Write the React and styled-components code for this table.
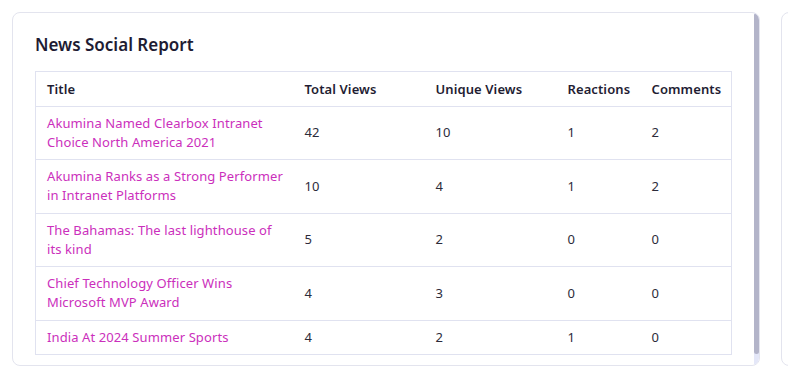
import React from 'react';
import styled, { createGlobalStyle } from 'styled-components';

const GlobalStyle = createGlobalStyle`
  html, body {
    margin: 0;
    padding: 0;
    background: #ffffff;
    overflow: hidden;
  }
  body {
    font-family: "Noto Sans", "Liberation Sans", sans-serif;
  }
`;

const Page = styled.div`
  display: flex;
  gap: 21px;
  padding: 12px 0 0 12px;
  width: 1200px;
`;

const Card = styled.div`
  flex: none;
  display: flex;
  width: ${(p) => p.width}px;
  height: 354px;
  box-sizing: border-box;
  border: 1px solid #e3e4ee;
  border-radius: 8px;
  background: #fff;
  overflow: hidden;
`;

const CardBody = styled.div`
  flex: 1;
  min-width: 0;
  padding: 20px 22px 22px 22px;
`;

// custom scroll rail drawn at the right edge of the card
const Rail = styled.div`
  flex: none;
  width: 5px;
  display: flex;
  flex-direction: column;
  background: #e4e7f8;
  border-radius: 0 0 4px 0;
`;

const Thumb = styled.div`
  height: ${(p) => p.pct}%;
  background: #b3b4c9;
  border-radius: 3px;
`;

const Heading = styled.h2`
  margin: 0 0 14px 0;
  font-size: 17px;
  line-height: 24px;
  font-weight: 600;
  color: #1e1c33;
`;

const Table = styled.table`
  width: 100%;
  border-collapse: collapse;
  border: 1px solid #e0e2f0;
  table-layout: fixed;
  font-size: 13px;
  line-height: 19px;
  letter-spacing: 0.1px;
`;

const Th = styled.th`
  box-sizing: border-box;
  width: ${(p) => (p.w ? `${p.w}px` : 'auto')};
  text-align: left;
  padding: 7.5px 11px 7px;
  font-weight: 600;
  color: #1f1d33;
  border-bottom: 1px solid #e0e2f0;
  white-space: nowrap;
`;

const Td = styled.td`
  padding: 7.25px 11px;
  color: #2c2b3a;
  border-bottom: 1px solid #e0e2f0;
  vertical-align: middle;
`;

const TitleLink = styled.a`
  color: #cb2fbc;
  text-decoration: none;
  cursor: pointer;
`;

const Line = styled.span`
  display: block;
  white-space: nowrap;
`;

const columns = [
  { label: 'Title', w: 258 },
  { label: 'Total Views', w: 131 },
  { label: 'Unique Views', w: 132 },
  { label: 'Reactions', w: 84 },
  { label: 'Comments' },
];

const rows = [
  { title: ['Akumina Named Clearbox Intranet', 'Choice North America 2021'], total: 42, unique: 10, reactions: 1, comments: 2 },
  { title: ['Akumina Ranks as a Strong Performer', 'in Intranet Platforms'], total: 10, unique: 4, reactions: 1, comments: 2 },
  { title: ['The Bahamas: The last lighthouse of', 'its kind'], total: 5, unique: 2, reactions: 0, comments: 0 },
  { title: ['Chief Technology Officer Wins', 'Microsoft MVP Award'], total: 4, unique: 3, reactions: 0, comments: 0 },
  { title: ['India At 2024 Summer Sports'], total: 4, unique: 2, reactions: 1, comments: 0 },
];

const App = () => {
  return (
    <>
      <GlobalStyle />
      <Page>
        <Card width={748}>
          <CardBody>
            <Heading>News Social Report</Heading>
            <Table>
              <thead>
                <tr>
                  {columns.map((c) => (
                    <Th key={c.label} w={c.w}>{c.label}</Th>
                  ))}
                </tr>
              </thead>
              <tbody>
                {rows.map((r, i) => (
                  <tr key={i}>
                    <Td>
                      <TitleLink>
                        {r.title.map((l) => <Line key={l}>{l}</Line>)}
                      </TitleLink>
                    </Td>
                    <Td>{r.total}</Td>
                    <Td>{r.unique}</Td>
                    <Td>{r.reactions}</Td>
                    <Td>{r.comments}</Td>
                  </tr>
                ))}
              </tbody>
            </Table>
          </CardBody>
          <Rail>
            <Thumb pct={97} />
          </Rail>
        </Card>
        <Card width={400} />
      </Page>
    </>
  );
};

export default App;
